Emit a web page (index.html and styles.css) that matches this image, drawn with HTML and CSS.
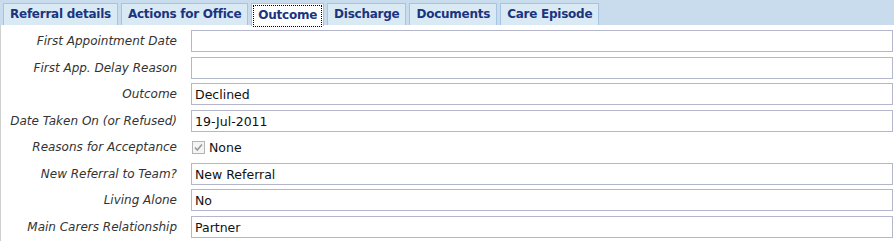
FILE: index.html
```html
<!DOCTYPE html>
<html lang="en">
<head>
    <meta charset="UTF-8">
    <title>Referral - Outcome</title>
    <link rel="stylesheet" href="styles.css">
</head>
<body>
    <div class="tabbar">
        <a class="tab" href="#">Referral details</a>
        <a class="tab" href="#">Actions for Office</a>
        <a class="tab active" href="#"><span>Outcome</span></a>
        <a class="tab" href="#">Discharge</a>
        <a class="tab" href="#">Documents</a>
        <a class="tab" href="#">Care Episode</a>
    </div>
    <div class="panel">
        <div class="row">
            <label class="lbl">First Appointment Date</label>
            <div class="field"></div>
        </div>
        <div class="row">
            <label class="lbl">First App. Delay Reason</label>
            <div class="field"></div>
        </div>
        <div class="row">
            <label class="lbl">Outcome</label>
            <div class="field">Declined</div>
        </div>
        <div class="row">
            <label class="lbl">Date Taken On (or Refused)</label>
            <div class="field">19-Jul-2011</div>
        </div>
        <div class="row check-row">
            <label class="lbl">Reasons for Acceptance</label>
            <div class="check">
                <span class="box">
                    <svg width="13" height="13" viewBox="0 0 13 13">
                        <rect x="0.5" y="0.5" width="12" height="12" fill="#f4f4f4" stroke="#b4b4b4"/>
                        <path d="M3 6.5 L5.3 9 L10 3.5" fill="none" stroke="#9a9a9a" stroke-width="1.6"/>
                    </svg>
                </span>
                <span>None</span>
            </div>
        </div>
        <div class="row">
            <label class="lbl">New Referral to Team?</label>
            <div class="field">New Referral</div>
        </div>
        <div class="row">
            <label class="lbl">Living Alone</label>
            <div class="field">No</div>
        </div>
        <div class="row">
            <label class="lbl">Main Carers Relationship</label>
            <div class="field">Partner</div>
        </div>
    </div>
</body>
</html>
```

FILE: styles.css
```css
body {
    margin: 0;
    background: #fff;
    font-family: "DejaVu Sans", Verdana, sans-serif;
    color: #222;
}
.tabbar {
    display: flex;
    align-items: flex-end;
    gap: 3px;
    height: 25px;
    padding-left: 3px;
    background: #c9dcee;
    box-sizing: border-box;
}
.tab {
    display: block;
    height: 22px;
    line-height: 21px;
    padding: 0 6px;
    box-sizing: border-box;
    background: #daeaf5;
    border: 1px solid #a6c3e4;
    border-bottom: none;
    color: #1a3580;
    font-size: 12px;
    font-weight: bold;
    text-decoration: none;
    letter-spacing: -0.25px;
}
.tab.active {
    background: #fff;
    height: 23px;
    margin-bottom: -1px;
    padding: 1px 1px 0;
}
.tab.active span {
    display: block;
    height: 20px;
    line-height: 19px;
    padding: 0 4px;
    border: 1px dotted #000;
}
.panel {
    border-left: 1px solid #d0d0d0;
    padding: 3px 0;
}
.row {
    display: flex;
    align-items: center;
    height: 26.5px;
}
.lbl {
    width: 176px;
    padding-right: 14px;
    text-align: right;
    font-style: italic;
    font-size: 12px;
    color: #333;
    flex-shrink: 0;
}
.field {
    width: 702px;
    height: 22px;
    box-sizing: border-box;
    border: 1px solid #b4b6cc;
    padding: 0 3px;
    line-height: 21px;
    font-size: 12.5px;
    color: #111;
}
.check {
    display: flex;
    align-items: center;
    gap: 4px;
    font-size: 12.5px;
    color: #111;
}
.box {
    display: flex;
    margin-left: 1px;
}
```
